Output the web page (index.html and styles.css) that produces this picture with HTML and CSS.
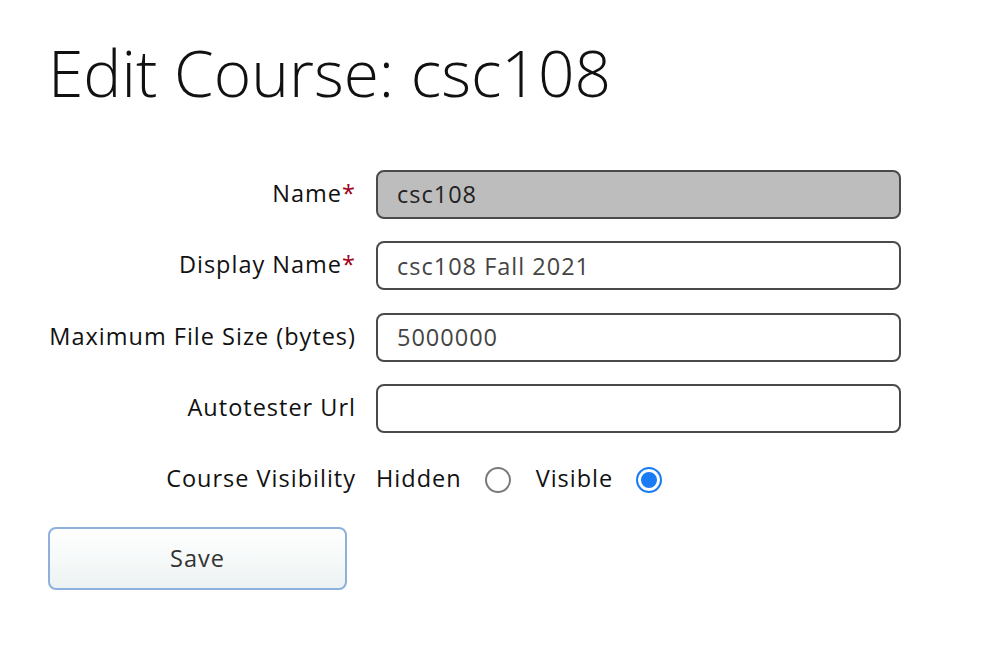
FILE: index.html
```html
<!DOCTYPE html>
<html lang="en">
<head>
<meta charset="utf-8">
<title>Edit Course: csc108</title>
<link rel="stylesheet" href="styles.css">
</head>
<body>
<main class="page">
  <h1 class="title">Edit Course: csc108</h1>
  <form class="form">
    <div class="grid">
      <label class="label" for="name">Name<span class="req">*</span></label>
      <input class="field field-disabled" id="name" type="text" value="csc108" readonly>

      <label class="label" for="display">Display Name<span class="req">*</span></label>
      <input class="field" id="display" type="text" value="csc108 Fall 2021">

      <label class="label" for="maxsize">Maximum File Size (bytes)</label>
      <input class="field" id="maxsize" type="text" value="5000000">

      <label class="label" for="autotester">Autotester Url</label>
      <input class="field" id="autotester" type="text" value="">

      <span class="label">Course Visibility</span>
      <div class="radios">
        <label class="radio-label" for="hidden">Hidden</label>
        <input class="radio" id="hidden" type="radio" name="vis">
        <label class="radio-label" for="visible">Visible</label>
        <input class="radio" id="visible" type="radio" name="vis" checked>
      </div>
    </div>
    <button class="save" type="button">Save</button>
  </form>
</main>
</body>
</html>
```
FILE: styles.css
```css
* { box-sizing: border-box; }
html, body { margin: 0; padding: 0; background: #fff; }
body {
  font-family: "Open Sans", "Noto Sans", sans-serif;
  color: #111;
}
.page {
  padding: 35px 0 0 48px;
}
.title {
  margin: 0 0 58px 0;
  font-size: 64px;
  font-weight: 300;
  line-height: 1.2;
  color: #111;
}
.grid {
  display: grid;
  grid-template-columns: 307px 525px;
  column-gap: 21px;
  row-gap: 22.5px;
  align-items: center;
}
.label {
  font-size: 23.5px;
  letter-spacing: 1px;
  text-align: right;
  justify-self: end;
  color: #111;
  white-space: nowrap;
  margin-right: -1px;
  padding-bottom: 3px;
}
.req { color: #a0001b; }
.field {
  height: 49px;
  width: 100%;
  border: 2px solid #4a4a4a;
  border-radius: 8px;
  padding: 0 19px;
  font-family: inherit;
  font-size: 23.5px;
  letter-spacing: 1px;
  color: #444;
  background: #fff;
  outline: none;
}
.field-disabled { background: #bdbdbd; color: #222; }
.radios {
  height: 48px;
  display: flex;
  align-items: center;
}
.radio-label {
  font-size: 23.5px;
  letter-spacing: 1px;
  color: #111;
  margin-right: 23px;
  padding-bottom: 3px;
}
.radio {
  appearance: none;
  -webkit-appearance: none;
  margin: 0 25px 0 0;
  width: 26px;
  height: 26px;
  border: 2px solid #7a7a7a;
  border-radius: 50%;
  background: #fff;
}
.radio:checked {
  border-color: #1a7cf5;
  box-shadow: inset 0 0 0 3px #fff, inset 0 0 0 12px #1a7cf5;
}
.save {
  margin-top: 23px;
  width: 299px;
  height: 63px;
  border: 2px solid #8db0dc;
  border-radius: 8px;
  background: linear-gradient(#ffffff, #ecf3f2);
  font-family: inherit;
  font-size: 23.5px;
  letter-spacing: 1px;
  color: #333;
}
```
